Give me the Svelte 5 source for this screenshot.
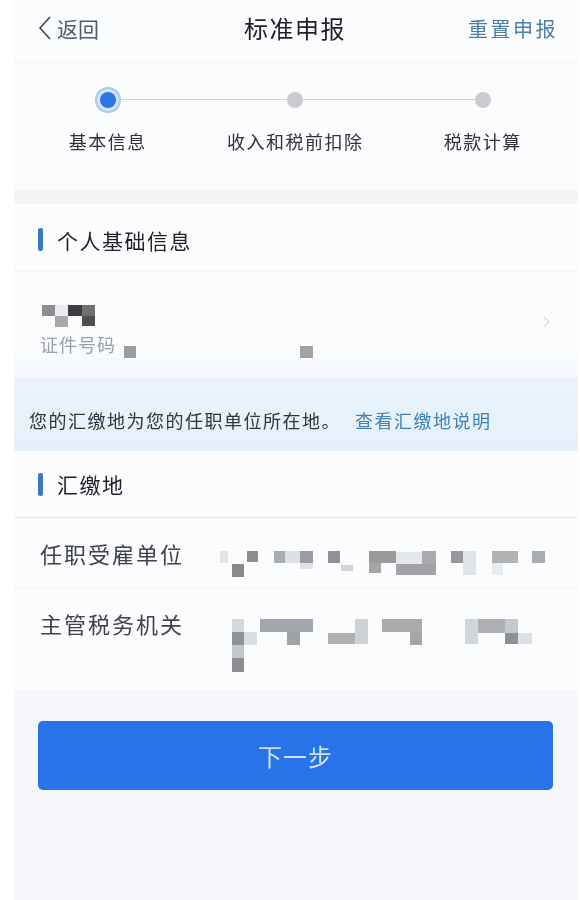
<script>
  const steps = [
    { label: '基本信息', active: true },
    { label: '收入和税前扣除', active: false },
    { label: '税款计算', active: false }
  ];

  // censored blocks: x, y, w, h relative to their row, colour
  const nameBlocks = [
    [0, 0, 13, 11, '#8e8c90'], [13, 0, 13, 11, '#ececee'], [13, 11, 13, 11, '#a8a8aa'],
    [26, 0, 14, 11, '#3e3c42'], [40, 0, 13, 11, '#6f7072'], [40, 11, 13, 10, '#4e4e50']
  ];
  const idBlocks = [
    [0, 0, 12, 12, '#9c9c9e'], [176, 0, 13, 12, '#a2a2a4']
  ];
  const employerBlocks = [
    [0, 0, 8, 12, '#e2e5e9'], [27, 0, 11, 11, '#8f8b91'], [12, 13, 12, 13, '#8a8a8c'],
    [54, 0, 11, 12, '#a8adb4'], [65, 0, 15, 12, '#dce0e6'], [80, 0, 13, 12, '#9a9ca2'], [80, 12, 13, 6, '#dfe2e6'],
    [108, 0, 12, 12, '#8f8f98'], [121, 14, 12, 6, '#d2d6d9'],
    [149, 0, 27, 12, '#9a9a9c'], [149, 12, 12, 10, '#a5a6a8'], [176, 1, 26, 12, '#e4e7ec'],
    [176, 13, 40, 11, '#a0a2a6'], [202, 0, 14, 13, '#a8aaac'],
    [231, 0, 12, 12, '#9a969c'], [243, 0, 13, 24, '#e1e4e8'],
    [272, 0, 26, 12, '#b0b2b4'], [272, 12, 11, 12, '#e9ecef'], [312, 0, 13, 12, '#a9acb2']
  ];
  const officeBlocks = [
    [0, 0, 12, 13, '#d2d8dc'], [0, 13, 12, 13, '#8e9196'], [12, 13, 13, 13, '#d7dde5'],
    [0, 26, 12, 13, '#c4c7ca'], [0, 39, 12, 14, '#8e8e92'],
    [28, 0, 53, 13, '#a3a6ac'], [55, 13, 13, 13, '#a0a2a6'],
    [96, 14, 27, 11, '#aeb0b2'], [123, 0, 13, 25, '#cfd2d4'],
    [150, 0, 40, 13, '#ababab'], [178, 13, 12, 13, '#a5a5a5'],
    [233, 0, 13, 25, '#d0d6dc'], [246, 0, 27, 14, '#aeb0b4'], [273, 0, 13, 14, '#c4c8cc'],
    [273, 14, 13, 11, '#8e9098'], [286, 14, 14, 11, '#dcdfe4']
  ];
</script>

{#snippet mosaic(blocks, cls)}
  <div class="mosaic {cls}">
    {#each blocks as b}
      <i style="left:{b[0]}px;top:{b[1]}px;width:{b[2]}px;height:{b[3]}px;background:{b[4]}"></i>
    {/each}
  </div>
{/snippet}

<div class="page">
  <header class="nav">
    <div class="back">
      <svg width="13" height="24" viewBox="0 0 13 24"><path d="M12 1 L2 12 L12 23" fill="none" stroke="#3f4650" stroke-width="1.6" /></svg>
      <span>返回</span>
    </div>
    <h1>标准申报</h1>
    <span class="reset">重置申报</span>
  </header>

  <div class="steps">
    {#each steps as step, i}
      <div class="step">
        <span class="dot" class:active={step.active} class:linked={i < steps.length - 1}></span>
        <span class="step-label">{step.label}</span>
      </div>
    {/each}
  </div>

  <div class="band"></div>

  <section>
    <h2 class="section-title"><span class="bar"></span>个人基础信息</h2>
    <div class="person">
      {@render mosaic(nameBlocks, 'name')}
      <div class="id-row">
        <span>证件号码</span>
        {@render mosaic(idBlocks, 'id')}
      </div>
      <svg class="arrow" width="7" height="12" viewBox="0 0 7 12"><path d="M1 1 L6 6 L1 11" fill="none" stroke="#d8dade" stroke-width="1.2" /></svg>
    </div>
  </section>

  <div class="notice">
    您的汇缴地为您的任职单位所在地。<a href="#top">查看汇缴地说明</a>
  </div>

  <section>
    <h2 class="section-title place"><span class="bar"></span>汇缴地</h2>
    <div class="row first">
      <span class="row-label">任职受雇单位</span>
      {@render mosaic(employerBlocks, 'employer')}
    </div>
    <div class="row second">
      <span class="row-label">主管税务机关</span>
      {@render mosaic(officeBlocks, 'office')}
    </div>
  </section>

  <footer>
    <button>下一步</button>
  </footer>
</div>

<style>
  :global(body) {
    margin: 0;
    background: #ffffff;
  }

  .page {
    margin-left: 14px;
    margin-right: 2px;
    height: 900px;
    display: flex;
    flex-direction: column;
    background: #fbfcfe;
    font-family: "Noto Sans CJK SC", "Noto Sans", sans-serif;
    color: #33363d;
    filter: blur(0.6px);
  }

  .nav {
    height: 63px;
    box-sizing: border-box;
    border-bottom: 1px solid #f2f3f6;
    display: flex;
    align-items: center;
    justify-content: space-between;
    padding: 0 20px 6px 24px;
    position: relative;
  }

  .back {
    display: flex;
    align-items: center;
    gap: 6px;
    font-size: 21px;
    line-height: 24px;
    color: #4f5d6e;
  }

  h1 {
    position: absolute;
    left: 230px;
    top: 10px;
    margin: 0;
    font-size: 24px;
    font-weight: 400;
    letter-spacing: 1.5px;
    color: #1f2127;
    line-height: 36px;
  }

  .reset {
    font-size: 20px;
    letter-spacing: 2.5px;
    color: #4a7ea6;
  }

  .steps {
    height: 127px;
    display: grid;
    grid-template-columns: repeat(3, 187.5px);
  }

  .step {
    display: flex;
    flex-direction: column;
    align-items: center;
    padding-top: 24px;
    gap: 15px;
  }

  .dot {
    position: relative;
    width: 16px;
    height: 16px;
    margin: 5px 0;
    border-radius: 50%;
    background: #c9cbce;
  }

  .dot.active {
    background: #2b78e4;
    box-shadow: 0 0 0 3px #d4e4f9, 0 0 0 5px #a9c8f2;
  }

  .dot.linked::after {
    content: "";
    position: absolute;
    left: 100%;
    top: 7px;
    width: 171.5px;
    height: 1px;
    background: #d3d6da;
  }

  .step-label {
    font-size: 18px;
    letter-spacing: 1.5px;
    line-height: 26px;
    white-space: nowrap;
    color: #2f323a;
  }

  .band {
    height: 14px;
    background: #f3f4f6;
  }

  .section-title {
    margin: 0;
    height: 68px;
    box-sizing: border-box;
    display: flex;
    align-items: center;
    padding: 4px 0 0 24px;
    gap: 14px;
    font-size: 21px;
    font-weight: 400;
    letter-spacing: 1.5px;
    color: #1f2127;
    border-bottom: 1px solid #f4f5f8;
  }

  .section-title.place {
    height: 67px;
    padding-top: 0;
    border-bottom-color: #e6e8ec;
  }

  .bar {
    width: 5px;
    height: 23px;
    border-radius: 2px;
    background: #3f76c4;
  }

  .person {
    position: relative;
    height: 106px;
    padding: 33px 0 0 28px;
    box-sizing: border-box;
    background: linear-gradient(#fbfcfe 70%, #f3f8fd);
  }

  .mosaic {
    position: relative;
  }

  .mosaic i {
    position: absolute;
  }

  .name {
    width: 53px;
    height: 22px;
  }

  .id-row {
    display: flex;
    height: 30px;
    margin: 2px 0 0 -2px;
    font-size: 18px;
    letter-spacing: 1px;
    line-height: 30px;
    color: #9a9ea5;
  }

  .id {
    margin: 17px 0 0 8px;
  }

  .arrow {
    position: absolute;
    right: 28px;
    top: 44px;
  }

  .notice {
    height: 73px;
    box-sizing: border-box;
    padding: 10px 0 0 15px;
    display: flex;
    align-items: center;
    font-size: 18px;
    letter-spacing: 1.5px;
    white-space: nowrap;
    color: #2f3540;
    background: linear-gradient(#eaf3fb, #e4f0fa);
  }

  .notice a {
    margin-left: 14px;
    color: #3d82b8;
    text-decoration: none;
  }

  .row {
    display: flex;
    box-sizing: border-box;
    padding-left: 26px;
  }

  .row.first {
    height: 70px;
    padding-top: 19px;
    border-bottom: 1px solid #f4f5f8;
  }

  .row.second {
    height: 102px;
    padding-top: 19px;
  }

  .row-label {
    font-size: 22px;
    letter-spacing: 2px;
    line-height: 32px;
    white-space: nowrap;
    color: #3f424a;
  }

  .employer {
    margin: 14px 0 0 36px;
  }

  .office {
    margin: 12px 0 0 48px;
  }

  footer {
    flex: 1;
    background: #f5f7fb;
    padding: 31px 25px 0 24px;
  }

  button {
    display: block;
    width: 100%;
    height: 69px;
    border: none;
    border-radius: 5px;
    background: #2873ea;
    color: #cfe2f7;
    font-family: inherit;
    font-size: 24px;
    letter-spacing: 1px;
  }
</style>
